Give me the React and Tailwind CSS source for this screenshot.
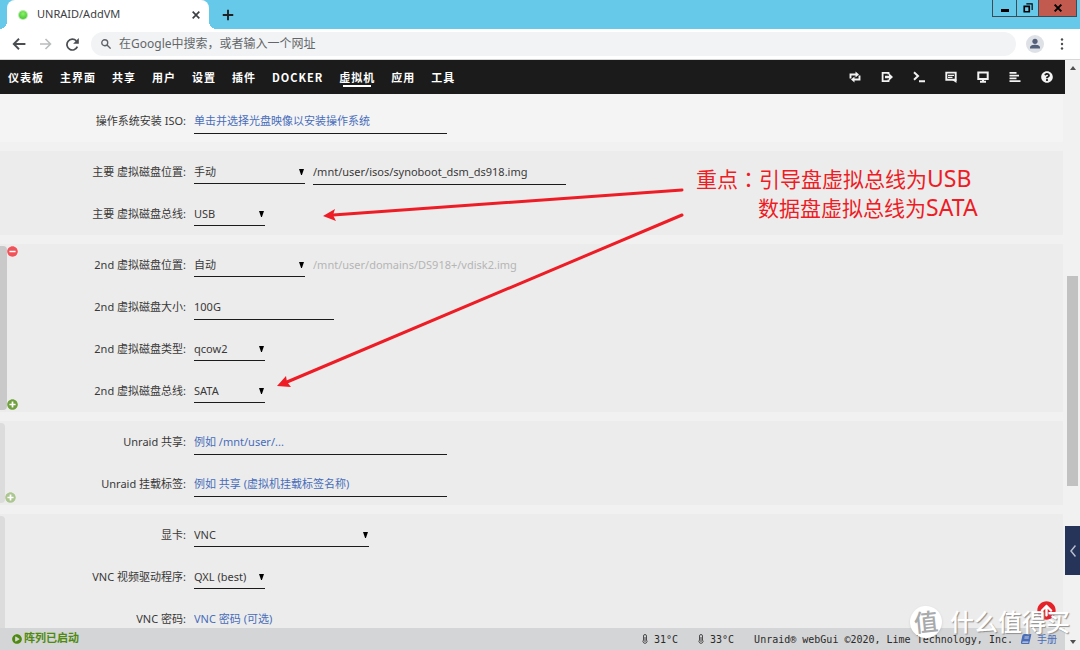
import React, { useState } from "react";
import {
  FaArrowCircleUp,
  FaBook,
  FaMinusCircle,
  FaPlayCircle,
  FaPlusCircle,
  FaQuestionCircle,
} from "react-icons/fa";

const menu = ["仪表板", "主界面", "共享", "用户", "设置", "插件", "Docker", "虚拟机", "应用", "工具"];

function Icon({ children, className = "size-3" }) {
  return (
    <svg viewBox="0 0 12 12" className={className} fill="none" stroke="currentColor" strokeWidth="1.6" aria-hidden="true">
      {children}
    </svg>
  );
}

const tools = [
  {
    label: "切换",
    icon: (
      <Icon>
        <path d="M1.500 7.500V3.500h5.500M10.500 4.500v4H5" strokeWidth="1.900" />
        <path d="M6.500 0.500l3.500 3L6.500 6.500zM5.500 5.500L2 8.500l3.500 3z" fill="currentColor" stroke="none" />
      </Icon>
    ),
  },
  {
    label: "退出",
    icon: (
      <Icon>
        <path d="M7.500 3.500V1.800H1.600v8.400h5.900V8.500" strokeWidth="1.800" />
        <path d="M4 4.800h4V2.200L12 6 8 9.800V7.200H4z" fill="currentColor" stroke="none" />
      </Icon>
    ),
  },
  {
    label: "终端",
    icon: (
      <Icon>
        <path d="M1 1.300L5 5 1 8.700M6 10.300h6" strokeWidth="2" />
      </Icon>
    ),
  },
  {
    label: "反馈",
    icon: (
      <Icon>
        <path d="M1.300 1.600h9.400v7.200H1.300z" strokeWidth="1.900" />
        <path d="M3 4.300h6M3 6.400h4.500" strokeWidth="1.200" />
        <path d="M6.500 8.500h5V12z" fill="currentColor" stroke="none" />
      </Icon>
    ),
  },
  {
    label: "信息",
    icon: (
      <Icon>
        <path d="M1.300 1.600h9.400v6.400H1.300zM3 10.800h6M6 8v2.500" strokeWidth="2" />
      </Icon>
    ),
  },
  {
    label: "日志",
    icon: (
      <Icon>
        <path d="M0.500 1.800h7M0.500 4.600h9.500M0.500 7.400h7M0.500 10.200h11" strokeWidth="1.800" />
      </Icon>
    ),
  },
  { label: "帮助", icon: <FaQuestionCircle className="size-3" /> },
];

function Row({ id, label, children }) {
  return (
    <div className="flex h-[42px] items-center gap-2">
      <label htmlFor={id} className="w-[186px] shrink-0 text-right">
        {label}:
      </label>
      {children}
    </div>
  );
}

function Select({ id, width, options }) {
  return (
    <span className={`relative ${width}`}>
      <select
        id={id}
        className="block h-6 w-full appearance-none border-b border-[#1c1b1b] bg-transparent pt-0.5 outline-none"
      >
        {options.map((option) => (
          <option key={option}>{option}</option>
        ))}
      </select>
      <svg viewBox="0 0 6 7" className="pointer-events-none absolute top-[9px] right-px h-1.5 w-[5px]" aria-hidden="true">
        <path d="M0 0h6L3.500 7h-1z" fill="#000" />
      </svg>
    </span>
  );
}

function Input({ width, ...props }) {
  return (
    <input
      {...props}
      className={`h-[26px] border-b border-[#1c1b1b] bg-transparent outline-none placeholder:text-[#486dba] disabled:border-transparent disabled:text-[#b5b5b5] ${width}`}
    />
  );
}

function Panel({ children }) {
  return <section className="relative mr-0.5 bg-[#ececec]">{children}</section>;
}

function Browser() {
  return (
    <header className="shrink-0 border-b border-[#d5d7d9] bg-white text-[#3c4043]">
      <div className="flex h-[29px] items-stretch bg-[#66c9ea]">
        <div className="relative ml-[7px] flex w-[202px] items-center rounded-t-lg bg-white pr-2 pl-3 text-[11px]">
          <span className="absolute bottom-0 -left-2 size-2 bg-[radial-gradient(circle_at_0_0,#66c9ea_8px,#fff_8px)]" />
          <span className="absolute -right-2 bottom-0 size-2 bg-[radial-gradient(circle_at_100%_0,#66c9ea_8px,#fff_8px)]" />
          <span className="mr-2.5 size-2 rounded-full bg-[radial-gradient(circle_at_50%_35%,#8df06c,#33bd22)] ring-1 ring-[#b8e9ad]" />
          <span className="flex-1">UNRAID/AddVM</span>
          <button type="button" aria-label="关闭标签页">
            <Icon className="size-2.5">
              <path d="M2 2l8 8M10 2l-8 8" strokeWidth="2" />
            </Icon>
          </button>
        </div>
        <button type="button" aria-label="新标签页" className="ml-3 text-[#202124]">
          <Icon className="size-3.5">
            <path d="M6 1.500v9M1.500 6h9" />
          </Icon>
        </button>
        <div className="mr-[3px] ml-auto flex h-[17px] divide-x divide-[#3d4c52] border border-t-0 border-[#3d4c52] text-black">
          <button type="button" aria-label="最小化" className="flex w-6 items-center justify-center">
            <span className="mt-1 h-[3px] w-2 bg-black" />
          </button>
          <button type="button" aria-label="还原" className="flex w-[22px] items-center justify-center">
            <Icon className="size-2.5">
              <path d="M1.500 4h6v6.500h-6z" strokeWidth="2" />
              <path d="M4 1h7v7.500" strokeWidth="1.400" />
            </Icon>
          </button>
          <button type="button" aria-label="关闭" className="flex w-[37px] items-center justify-center bg-[#c35a50]">
            <Icon className="size-2.5">
              <path d="M2 2l8 8M10 2l-8 8" strokeWidth="2.400" />
            </Icon>
          </button>
        </div>
      </div>
      <div className="flex h-[30px] items-center pr-4 pl-3 text-[#5f6368]">
        <button type="button" aria-label="后退" className="mr-3.5 text-[#4a4d51]">
          <Icon className="size-3.5">
            <path d="M11.500 6H1.500M6 1.500L1.500 6 6 10.500" />
          </Icon>
        </button>
        <button type="button" aria-label="前进" className="mr-3.5 text-[#babcbe]">
          <Icon>
            <path d="M0 6h10.500M5.500 1l5 5-5 5" />
          </Icon>
        </button>
        <button type="button" aria-label="刷新" className="mr-3 text-[#4a4d51]">
          <Icon className="size-[13px]">
            <path d="M10.500 8A5 5 0 1 1 9.500 2.600" />
            <path d="M11.800 0v5.200H6.600z" fill="currentColor" stroke="none" />
          </Icon>
        </button>
        <div className="flex h-6 flex-1 items-center rounded-full bg-[#f1f3f4] pl-2.5">
          <Icon className="mr-2 size-2.5">
            <circle cx="4.500" cy="4.500" r="3.600" />
            <path d="M7.200 7.200L11.500 11.500" />
          </Icon>
          <input
            aria-label="地址栏"
            placeholder="在Google中搜索，或者输入一个网址"
            className="flex-1 bg-transparent text-xs outline-none placeholder:text-[#63676b]"
          />
        </div>
        <button type="button" aria-label="用户" className="mr-4 ml-2.5">
          <svg viewBox="0 0 18 18" className="size-[18px]" aria-hidden="true">
            <circle cx="9" cy="9" r="9" fill="#dee1e6" />
            <circle cx="9" cy="6.300" r="2.600" fill="#53607a" />
            <path d="M4 13.500v-1c0-2 3-2.700 5-2.700s5 .7 5 2.700v1z" fill="#53607a" />
          </svg>
        </button>
        <button type="button" aria-label="菜单">
          <svg viewBox="0 0 4 12" className="h-3 w-1" fill="#4a4d51" aria-hidden="true">
            <circle cx="2" cy="1.500" r="1.200" />
            <circle cx="2" cy="6" r="1.200" />
            <circle cx="2" cy="10.500" r="1.200" />
          </svg>
        </button>
      </div>
    </header>
  );
}

function Navigation() {
  const [active, setActive] = useState("虚拟机");

  return (
    <nav className="flex h-[34px] shrink-0 items-center gap-4 bg-[#1c1b1b] pr-3 pl-2 font-['Noto_Sans_CJK_SC',sans-serif] text-[11px] font-bold text-white">
      {menu.map((item) => (
        <button
          key={item}
          type="button"
          onClick={() => setActive(item)}
          className={`relative tracking-[1px] whitespace-nowrap uppercase ${
            active === item ? "after:absolute after:inset-x-1 after:-bottom-0.5 after:h-0.5 after:bg-white" : ""
          }`}
        >
          {item}
        </button>
      ))}
      <div className="ml-auto flex gap-5 text-[#f2f2f2]">
        {tools.map((tool) => (
          <button key={tool.label} type="button" aria-label={tool.label}>
            {tool.icon}
          </button>
        ))}
      </div>
    </nav>
  );
}

function Annotation() {
  return (
    <div className="pointer-events-none absolute inset-0 text-[#ee1c25]">
      <svg width="700" height="310" className="absolute top-0 left-0" fill="currentColor" aria-hidden="true">
        <path d="M682 96L333 121M682 121L287 288" stroke="currentColor" strokeWidth="3" strokeLinecap="round" />
        <path d="M323 122L335 115 333 121 336 127zM277 292L286 282 287 288 291 293z" />
      </svg>
      <p className="absolute top-[70px] left-[696px] text-[21px] leading-7 whitespace-nowrap">
        重点<span className="font-['Noto_Sans_CJK_TC']">：</span>引导盘虚拟总线为
        <span className="text-[23px]">USB</span>
        <br />
        <span className="pl-[62px]">数据盘虚拟总线为</span>
        <span className="text-[23px]">SATA</span>
      </p>
    </div>
  );
}

function VmForm() {
  return (
    <main className="relative min-h-0 flex-1 overflow-hidden">
      <form className="flex flex-col gap-[9px]">
        <section className="mr-0.5 bg-[#f4f4f4] pt-1.5">
          <Row id="iso" label="操作系统安装 ISO">
            <Input id="iso" width="w-[253px]" placeholder="单击并选择光盘映像以安装操作系统" />
          </Row>
        </section>

        <Panel>
          <Row id="disk1" label="主要 虚拟磁盘位置">
            <Select id="disk1" width="w-[111px]" options={["手动", "自动"]} />
            <Input width="w-[253px]" aria-label="磁盘路径" defaultValue="/mnt/user/isos/synoboot_dsm_ds918.img" />
          </Row>
          <Row id="bus1" label="主要 虚拟磁盘总线">
            <Select id="bus1" width="w-[71px]" options={["USB", "SATA"]} />
          </Row>
        </Panel>

        <Panel>
          <span className="absolute inset-y-0.5 left-0 w-[7px] rounded-r-sm bg-[#c9c9c9]" />
          <button type="button" aria-label="移除磁盘" className="absolute top-0.5 left-[7px] rounded-full bg-white text-[#f0525a]">
            <FaMinusCircle className="size-[11px]" />
          </button>
          <button type="button" aria-label="添加磁盘" className="absolute bottom-0.5 left-[7px] rounded-full bg-white text-[#6fa03c]">
            <FaPlusCircle className="size-[11px]" />
          </button>
          <Row id="disk2" label="2nd 虚拟磁盘位置">
            <Select id="disk2" width="w-[111px]" options={["自动", "手动"]} />
            <Input width="w-[253px]" aria-label="第二磁盘路径" disabled defaultValue="/mnt/user/domains/DS918+/vdisk2.img" />
          </Row>
          <Row id="size2" label="2nd 虚拟磁盘大小">
            <Input id="size2" width="w-[140px]" defaultValue="100G" />
          </Row>
          <Row id="type2" label="2nd 虚拟磁盘类型">
            <Select id="type2" width="w-[71px]" options={["qcow2", "raw"]} />
          </Row>
          <Row id="bus2" label="2nd 虚拟磁盘总线">
            <Select id="bus2" width="w-[71px]" options={["SATA", "USB"]} />
          </Row>
        </Panel>

        <Panel>
          <span className="absolute inset-y-0.5 left-0 w-[5px] rounded-r-sm bg-[#dcdcdc]" />
          <button type="button" aria-label="添加共享" className="absolute bottom-0.5 left-[5px] rounded-full bg-white text-[#acc691]">
            <FaPlusCircle className="size-[11px]" />
          </button>
          <Row id="share" label="Unraid 共享">
            <Input id="share" width="w-[253px]" placeholder="例如 /mnt/user/..." />
          </Row>
          <Row id="mount" label="Unraid 挂载标签">
            <Input id="mount" width="w-[253px]" placeholder="例如 共享 (虚拟机挂载标签名称)" />
          </Row>
        </Panel>

        <Panel>
          <span className="absolute inset-y-0.5 left-0 w-[5px] rounded-r-sm bg-[#dcdcdc]" />
          <Row id="gpu" label="显卡">
            <Select id="gpu" width="w-[175px]" options={["VNC"]} />
          </Row>
          <Row id="driver" label="VNC 视频驱动程序">
            <Select id="driver" width="w-[71px]" options={["QXL (best)", "Cirrus"]} />
          </Row>
          <Row id="password" label="VNC 密码">
            <Input id="password" width="w-[253px]" type="password" placeholder="VNC 密码 (可选)" />
          </Row>
        </Panel>
      </form>
      <Annotation />
      <a href="#top" aria-label="返回顶部" className="absolute right-[9px] bottom-2 rounded-full bg-white text-[#e32329]">
        <FaArrowCircleUp className="size-[19px]" />
      </a>
    </main>
  );
}

function Temperature({ value }) {
  return (
    <span className="flex items-center gap-1.5">
      <svg viewBox="0 0 6 10" className="h-2.5 w-1.5" fill="none" stroke="currentColor" aria-hidden="true">
        <path d="M1.500 6V2a1.500 1.500 0 0 1 3 0v4a2 2 0 1 1-3 0zM3 3v5" strokeWidth="0.800" />
      </svg>
      {value}
    </span>
  );
}

function Footer() {
  return (
    <footer className="flex h-[22px] shrink-0 items-center bg-[#d4d5d6] pr-2 pl-3 font-['DejaVu_Sans_Mono','Noto_Sans_CJK_SC',monospace] text-[10px] whitespace-nowrap text-[#2b2a29]">
      <span className="flex items-center gap-0.5 text-[11px] font-bold text-[#4f8a10]">
        <FaPlayCircle className="size-2.5" />
        阵列已启动
      </span>
      <div className="ml-auto flex items-center gap-5">
        <Temperature value="31°C" />
        <Temperature value="33°C" />
        <span>Unraid® webGui ©2020, Lime Technology, Inc.</span>
      </div>
      <a href="#manual" className="ml-2 flex items-center gap-1.5 text-[#486dba]">
        <FaBook className="size-2.5 -skew-x-12" />
        手册
      </a>
    </footer>
  );
}

function Scrollbar() {
  return (
    <div className="relative flex w-[15px] shrink-0 flex-col items-center bg-[#f1f1f1] py-1.5">
      <svg viewBox="0 0 6 4" className="h-1 w-1.5 shrink-0" aria-hidden="true">
        <path d="M0 4l3-4 3 4z" fill="#505050" />
      </svg>
      <span className="grow-[206]" />
      <span className="w-[11px] grow-[209] bg-[#c1c1c1]" />
      <span className="grow-[154]" />
      <svg viewBox="0 0 6 4" className="h-1 w-1.5 shrink-0" aria-hidden="true">
        <path d="M0 0l3 4 3-4z" fill="#505050" />
      </svg>
      <button
        type="button"
        aria-label="展开侧栏"
        className="absolute inset-x-0 bottom-[75px] flex h-[49px] items-center justify-center bg-[#27345a] text-[#b9c0d0]"
      >
        <svg viewBox="0 0 6 12" className="h-3 w-1.5" fill="none" stroke="currentColor" strokeWidth="1.500" aria-hidden="true">
          <path d="M5.500 0.500L1 6l4.500 5.500" />
        </svg>
      </button>
    </div>
  );
}

function Watermark() {
  return (
    <div className="pointer-events-none absolute right-2.5 bottom-2.5 flex items-center gap-2 text-white">
      <span className="flex size-8 -rotate-6 items-center justify-center rounded-full bg-white text-2xl leading-none font-medium text-[#a9aaab] shadow-sm">
        值
      </span>
      <span className="text-2xl leading-9 font-medium [text-shadow:1px_1px_1px_#8f8f8f]">什么值得买</span>
    </div>
  );
}

export default function App() {
  return (
    <div className="relative flex h-screen flex-col overflow-hidden bg-[#f1f1f1] font-['Noto_Sans','Noto_Sans_CJK_SC',sans-serif] text-[11px] text-[#3a3938]">
      <Browser />
      <div className="flex min-h-0 flex-1">
        <div className="flex min-w-0 flex-1 flex-col">
          <Navigation />
          <VmForm />
          <Footer />
        </div>
        <Scrollbar />
      </div>
      <Watermark />
    </div>
  );
}
